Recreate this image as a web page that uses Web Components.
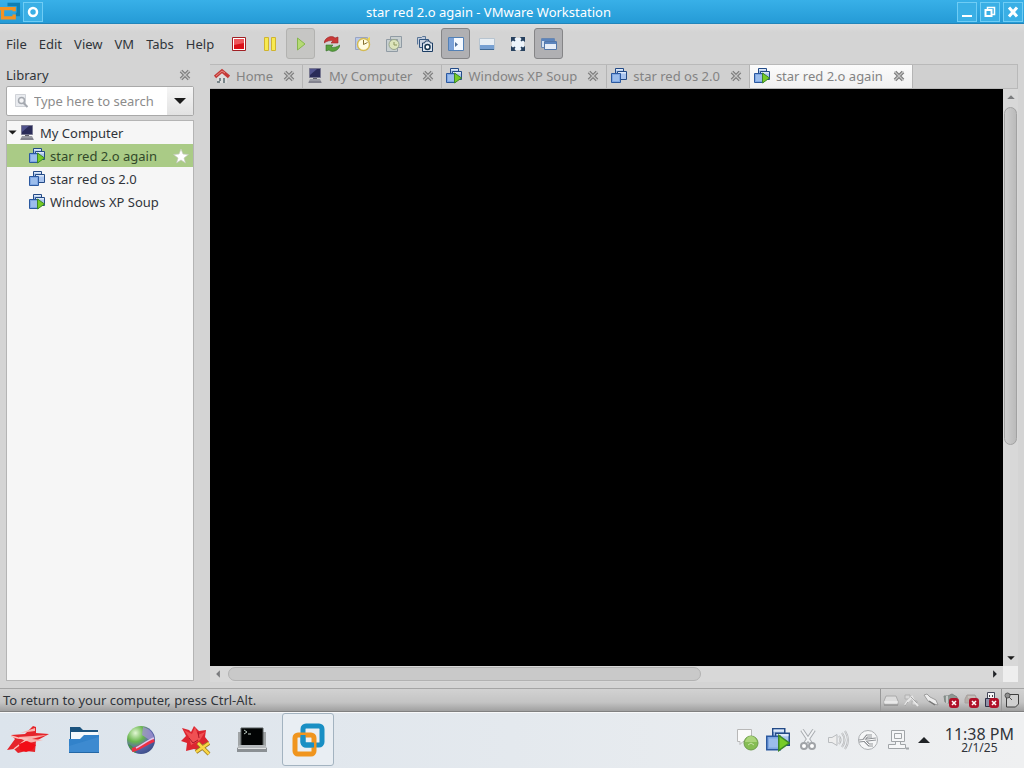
<!DOCTYPE html>
<html lang="en">
<head>
<meta charset="utf-8">
<title>star red 2.o again - VMware Workstation</title>
<style>
    body {
        margin: 0;
        height: 100vh;
        display: flex;
        flex-direction: column;
        overflow: hidden;
        background: #d4d4d4;
        color: #30343a;
        font: 13px/20px "Noto Sans", "Open Sans", sans-serif;
    }
</style>
</head>
<body>
<title-bar>star red 2.o again - VMware Workstation</title-bar>
<menu-bar></menu-bar>
<work-area>
    <library-panel slot="library"></library-panel>
    <tab-strip>
        <vm-tab icon="home">Home</vm-tab>
        <vm-tab icon="computer">My Computer</vm-tab>
        <vm-tab icon="vm-on">Windows XP Soup</vm-tab>
        <vm-tab icon="vm">star red os 2.0</vm-tab>
        <vm-tab icon="vm-on" active>star red 2.o again</vm-tab>
    </tab-strip>
    <console-view></console-view>
</work-area>
<status-bar>To return to your computer, press Ctrl-Alt.</status-bar>
<task-bar></task-bar>

<script>
const badge = '<rect x="6" y="6" width="10" height="10" rx="3" fill="#b01028"/><path d="M9 9l4 4m0-4l-4 4" stroke="#fff" stroke-width="1.5"/>';
const vmBase = `<path d="M4.500 .500h8v8h-8z" fill="#9dbbe6" stroke="#234a86"/><path d="M5 1h7v1.500H5z" fill="#dce8f8"/>
    <path d="M6.500 3.500h9v8h-9z" fill="#a9c4ee" stroke="#234a86"/><path d="M7 4h8v1.500H7z" fill="#dce8f8"/>
    <path d="M.500 5.500h9v9h-9z" fill="#7ea6e2" stroke="#2b59a0"/><path d="M2 7h6v6H2z" fill="#9bbdec"/>`;

// each entry: [viewBox side, markup]
const icons = {
    app: [24, '<path d="M9 3h13v12h-3" fill="none" stroke="#0f7fb2" stroke-width="4"/><path d="M-3 8h20v3M17 15v4H3V9" fill="none" stroke="#f29222" stroke-width="4"/>'],
    ring: [16, '<circle cx="8" cy="8" r="4" fill="none" stroke="#fff" stroke-width="2.5"/>'],
    minimize: [16, '<path d="M3 12h10" stroke="#fff" stroke-width="2"/>'],
    restore: [16, '<path d="M5.500 6V3.500h7v7H10" fill="none" stroke="#fff" stroke-width="1.500"/><path d="M3.500 6h6v6h-6z" fill="none" stroke="#fff" stroke-width="2"/>'],
    quit: [16, '<path d="M4 3.500l8 9m0-9l-8 9" stroke="#fff" stroke-width="3"/>'],
    close: [12, '<path d="M2 2l8 8m0-8l-8 8" stroke="#7c7c7c" stroke-width="3.600"/><path d="M1.500 1.500l9 9m0-9l-9 9" stroke="#c4c4c4" stroke-width="1.200"/>'],
    stop: [16, '<path d="M1.500 1.500h13v13h-13z" fill="#fff" stroke="#a02024"/><path d="M3 3h10v10H3z" fill="#db1018"/><path d="M3 3h10v4L3 9z" fill="#ee555a"/>'],
    pause: [16, '<path d="M2.500 1.500h4v13h-4zM9.500 1.500h4v13h-4z" fill="#f7ea50" stroke="#d0b430"/>'],
    play: [16, '<path d="M4.500 2v12L12 8z" fill="#b5da75" stroke="#86b64c"/>'],
    restart: [16, '<path d="M0 7c1-6 8-8 11-5l3-1v6H7l2-2C6 4 3 5 0 7z" fill="#c93a38" stroke="#9b2526" stroke-width=".6"/><path d="M16 9c-1 6-8 8-11 5l-3 1V9h7l-2 2c3 1 6 0 9-2z" fill="#58a03c" stroke="#35702a" stroke-width=".6"/>'],
    snapshot: [16, '<path d="M.500 1.500h12v12H.500z" fill="#b9c8e8" stroke="#98a4c4"/><circle cx="8.500" cy="8.500" r="6" fill="#fffce0" stroke="#d4bb55" stroke-width="1.500"/><path d="M8.500 4v4.500l4-2" stroke="#867232" fill="none"/><path d="M12 3l3-2v4z" fill="#efd650"/>'],
    revert: [16, '<path d="M4.500 .500h11v11h-11zM.500 3.500h11v12H.500z" fill="#c8cfd0" stroke="#909ba4"/><circle cx="8" cy="8.500" r="5" fill="#dce4bc" stroke="#98a68c"/><path d="M8 6v3h3" fill="none" stroke="#8c965c"/>'],
    manager: [16, '<path d="M.500 8.500v-7h4l1-1h3v3" fill="#c1cbdc" stroke="#5b7697"/><path d="M2.500 3.500h9v8h-9z" fill="#cad3e0" stroke="#32557f"/><path d="M5.500 7h2l1-2h4l1 2h2v8.500h-10z" fill="#dce4ee" stroke="#1c3d63"/><circle cx="10.500" cy="11" r="2.500" fill="#fff" stroke="#173650" stroke-width="1.500"/>'],
    sidebar: [16, '<path d="M.500 1.500h15v13H.500z" fill="#f5f9ff" stroke="#5380b5"/><path d="M1 2h5v12H1z" fill="#7ca2d8"/><path d="M7 6l3 2.500L7 11z" fill="#50709c"/>'],
    thumbs: [16, '<path d="M.500 2.500h15v11H.500z" fill="#e8eef4" stroke="#b7c4d0"/><path d="M1 9h14v4H1z" fill="#77a0d2"/><path d="M1 13.500h14" stroke="#416994"/>'],
    fullscreen: [16, '<path d="M2 2h12v12H2z" fill="#edf4fb"/><path d="M1 1h5L4.500 3 5.500 4.500l-1 1L3 4.500 1 6zM10 1h5v5l-2-1.500-1.500 1-1-1L11.500 3zM1 10l2 1.500 1.500-1 1 1L4.500 13 6 15H1zM11.500 10.500l1.500 1 2-1.500v5h-5l1.500-2-1-1.500z" fill="#27415f"/>'],
    unity: [16, '<path d="M.500 2.500h13v9H.500z" fill="#d4e1f2" stroke="#6987b1"/><path d="M3.500 5.500h12v8h-12z" fill="#e6edf7" stroke="#5276a8"/><path d="M1 3h12v2H1zM4 6h11v2H4z" fill="#5b84bd"/>'],
    home: [16, '<path d="M3 9l5-5 5 5v6H3z" fill="#dedede"/><path d="M1 9l7-6 7 6" fill="none" stroke="#c43a38" stroke-width="3.500"/><path d="M2 8l6-5 3 2" fill="none" stroke="#e48a83"/><path d="M5 10h2v3H5zM9 10h2v5H9zM3 13h3v2H3z" fill="#79868a"/>'],
    computer: [16, '<path d="M2.500 .500h11v9h-11z" fill="#2a2b58" stroke="#777790"/><path d="M3 1h7L3 7z" fill="#52548e"/><path d="M6 10h4v2H6z" fill="#60606a"/><path d="M3 11h10l2 4H1z" fill="#9a9ba4"/><path d="M2 14h12" stroke="#6a6b78"/>'],
    vm: [16, vmBase],
    'vm-on': [16, vmBase + '<path d="M8.500 5v10L15.500 10z" fill="#77cc26" stroke="#3c8728"/>'],
    find: [16, '<path d="M2.500 1.500h10v12h-10z" fill="#e9ebef" stroke="#d0d3d8"/><circle cx="8.500" cy="7.500" r="3" fill="#f4f4f6" stroke="#a5a9b0" stroke-width="1.500"/><path d="M10.500 10l4 4" stroke="#a5a9b0" stroke-width="2"/>'],
    down: [16, '<path d="M2 5h12L8 11z" fill="#1c1c1c"/>'],
    star: [16, '<path d="M8 1l2 5 5.500.500-4.500 3.500 1.500 5L8 12l-4.500 3L5 10 .500 6.500 6 6z" fill="#fff" stroke="#c3c9ba" stroke-width=".7"/>'],
    disk: [16, '<path d="M3 4h10l2 5v4H1V9z" fill="#dcdcdc" stroke="#aaa"/><path d="M1 10h14" stroke="#f6f6f6"/><path d="M1 13h14" stroke="#858585"/>'],
    net: [16, '<path d="M2 3h5v4H2zM9 9h5v4H9z" fill="#d8d8d8" stroke="#b0b0b0"/><path d="M2 13l3-4 4-4 2 4 4 5" fill="none" stroke="#e8e8e8" stroke-width="2"/><path d="M2 14l3-4M8 5l6 6" stroke="#a5a5a5"/>'],
    plug: [16, '<path d="M1 3l3-1 3 3 6 3 2 5-4-1-6-3z" fill="#ededed" stroke="#9e9e9e"/><path d="M6 9l6 4" stroke="#777" stroke-width="1.500"/>'],
    'sound-off': [16, '<path d="M1 4h4l4-2 5 3v6L9 12 2 10z" fill="#8e9893" stroke="#7f8784"/><path d="M4 4v7" stroke="#c5cac8" stroke-width="2"/>' + badge],
    'printer-off': [16, '<path d="M4 3h8l2 4v4H2V7z" fill="#b5aea9" stroke="#a7a09e"/><path d="M5 5h7" stroke="#d6d1cc"/>' + badge],
    'usb-off': [16, '<path d="M4.500 .500h7v6h-7z" fill="#f5f5f7" stroke="#45485a"/><path d="M2.500 6.500h11v8h-11z" fill="#8f91a7" stroke="#2f3145"/><path d="M6 3h1v2H6zm3 0h1v2H9z" fill="#444"/>' + badge],
    message: [16, '<path d="M2.500 3v12h9l3-3V2.500H6" fill="#d0d0d0" stroke="#3e3e3e"/><circle cx="3.500" cy="3.500" r="2.500" fill="#8f8f8f" stroke="#555"/><path d="M5 5l3 3" stroke="#555"/>'],
    redstar: [44, '<path d="M1 32l8-11-4-4 14-1 8-8 3 1v6l13 1-13 7-1 11-9-1-8 2-4-4z" fill="#e5242a"/><path d="M14 15l15-5v3zM12 19l29-2-15 4 11 1-14 3z" fill="#f9b1ab"/><path d="M5 18l7 2 9 1-13 10" fill="none" stroke="#fac3bd" stroke-width="1.500"/><path d="M13 26l8-3 9 4-4 5-6 2-6-2z" fill="#f20d16"/>'],
    folder: [32, '<path d="M2 3h10l3 3h15v20H2z" fill="#1b537e"/><path d="M3 8h27v8H3z" fill="#f4f8fb"/><path d="M1 15h11l4-4h15v18H1z" fill="#3282ca"/><path d="M1 22L31 13v16H1z" fill="#4b94d6" opacity=".45"/><path d="M1 28.500h30" stroke="#2367a5"/>'],
    globe: [32, '<defs><radialGradient id="g" cx=".3" cy=".25" r=".9"><stop offset="0" stop-color="#e2f7d4"/><stop offset=".35" stop-color="#69b64e"/><stop offset=".6" stop-color="#5b67ae"/><stop offset="1" stop-color="#34477c"/></radialGradient></defs><circle cx="17" cy="16" r="14" fill="url(#g)"/><path d="M19 3c8 2 12 8 11 15l-6-3-6-4z" fill="#a092d0" opacity=".8"/><path d="M4 20c5 2 7 4 8 9-4-1-7-5-8-9z" fill="#459248"/><path d="M8 26c7-1 10-5 22-10" stroke="#ed3045" stroke-width="4" fill="none"/><path d="M12 24c5-2 10-7 18-10" stroke="#dfc8ec" stroke-width="1.500" fill="none"/>'],
    splat: [32, '<path d="M11 8l3-6 5 5 7-1-1 7 4 5-7 3-2 6-6-2-8 2 1-8-6-2 5-5-4-8 7 2z" fill="#dc2530"/><path d="M4 6l8 4 3-7 3 8 7-3-5 8-9 5-2-8z" fill="#f05053"/><path d="M9 14l4 5 5-3m0-8l1 6" stroke="#a91627" fill="none"/><path d="M18 19l11 11m-13-2l13-9" stroke="#967720" stroke-width="4"/><path d="M18 19l11 11m-13-2l13-9" stroke="#f9d645" stroke-width="2.500"/>'],
    terminal: [32, '<path d="M2 8h4v14H2zm24 0h4v14h-4z" fill="#a0a4a6"/><path d="M5 4h22v19H5z" fill="#020404" stroke="#545b5b"/><path d="M8 6l3 2-3 2m4 0h3" fill="none" stroke="#b7c6bd"/><path d="M3 21h26l2 3H1z" fill="#b5b9bc"/><path d="M1 24h30v4H1z" fill="#8b9094"/><path d="M2 24.500h28" stroke="#e0e2e3"/>'],
    vmware: [36, '<rect x="13" y="4" width="19" height="19" rx="3" fill="none" stroke="#198fc4" stroke-width="5"/><rect x="5" y="13" width="19" height="19" rx="3" fill="none" stroke="#f0951e" stroke-width="5"/><path d="M13 13v7a3 3 0 0 0 3 3h8" fill="none" stroke="#198fc4" stroke-width="5"/>'],
    notify: [24, '<path d="M1.500 1.500h14v12H7l-3 3v-3H1.500z" fill="#fafafa" stroke="#b8b8b8"/><circle cx="15" cy="15" r="7" fill="#86bd54" stroke="#6d9c4b"/><path d="M9 14c2-8 10-8 12 0z" fill="#abd57b"/><path d="M12 17l3-2 3 2" fill="none" stroke="#c6e2a8"/>'],
    cut: [24, '<path d="M6 2l10 15M18 2L8 17" stroke="#a8acb0" stroke-width="4"/><path d="M6 2l10 15M18 2L8 17" stroke="#f1f3f5" stroke-width="2"/><circle cx="8" cy="18" r="3" fill="#fff" stroke="#a0a3a7" stroke-width="2"/><circle cx="16" cy="18" r="3" fill="#fff" stroke="#a0a3a7" stroke-width="2"/>'],
    volume: [24, '<path d="M2.500 9.500H6l5-3v11l-5-3H2.500z" fill="#eee" stroke="#b9bcbf"/><path d="M13 8q3 4 0 8M16 5q5 7 0 14M19 3q6 9 0 18" fill="none" stroke="#b0b3b6" stroke-width="2"/><path d="M13 8q3 4 0 8M16 5q5 7 0 14M19 3q6 9 0 18" fill="none" stroke="#eee" stroke-width=".7"/>'],
    usb: [24, '<circle cx="12" cy="12" r="9.500" fill="#f5f6f7" stroke="#acafb2"/><path d="M3 13l17-2M7 13l4-5h5M8 12l5 5h4" fill="none" stroke="#909397" stroke-width="3"/><path d="M3 13l17-2M7 13l4-5h5M8 12l5 5h4" fill="none" stroke="#fff"/>'],
    wired: [24, '<path d="M5.500 2.500h13v11h-13zM8.500 5.500h7v5h-7zM9.500 13.500v3h-7v4h17v-4h-5v-3" fill="#f6f7f8" stroke="#a1a5a8"/><path d="M20 20.500h3" stroke="#a1a5a8" stroke-width="2"/>'],
    up: [16, '<path d="M2 11h12L8 5z" fill="#202326"/>']
};

function define(name, html) {
    customElements.define(name, class extends HTMLElement {
        connectedCallback() {
            this.attachShadow({ mode: 'open' });
            this.shadowRoot.innerHTML = typeof html === 'function' ? html(this) : html;
        }
    });
}

define('vm-icon', el => {
    const [box, markup] = icons[el.getAttribute('name')];
    const size = el.getAttribute('size') || 16;
    return `
        <style>
        :host { display: inline-flex; flex: none; }
        svg { display: block; }
        </style>
        <svg width="${size}" height="${size}" viewBox="0 0 ${box} ${box}" aria-hidden="true">${markup}</svg>`;
});

define('title-bar', `
    <style>
    :host {
        display: flex;
        align-items: center;
        height: 24px;
        box-sizing: border-box;
        border-bottom: 1px solid #2285ba;
        background: linear-gradient(#38b0e8, #259bd6);
        color: #fff;
    }
    .side { display: flex; gap: 3px; }
    .left { width: 44px; }
    .right { justify-content: flex-end; width: 90px; padding-right: 1px; }
    .title { flex: 1; text-align: center; }
    button {
        display: flex;
        align-items: center;
        justify-content: center;
        width: 20px;
        height: 20px;
        padding: 0;
        border: 1px solid #6fcdf5;
        background: #3aafe5;
    }
    </style>
    <div class="side left">
        <vm-icon name="app" size="20"></vm-icon>
        <button aria-label="Window menu"><vm-icon name="ring"></vm-icon></button>
    </div>
    <div class="title"><slot></slot></div>
    <div class="side right">
        <button aria-label="Minimize"><vm-icon name="minimize"></vm-icon></button>
        <button aria-label="Restore"><vm-icon name="restore"></vm-icon></button>
        <button aria-label="Close"><vm-icon name="quit"></vm-icon></button>
    </div>`);

const tools = [
    ['stop', 'Power off'], ['pause', 'Suspend'], ['play', 'Power on', 'pale'], ['restart', 'Restart'],
    ['snapshot', 'Take snapshot'], ['revert', 'Revert'], ['manager', 'Snapshot manager'], ['sidebar', 'Library', 'on'],
    ['thumbs', 'Thumbnail bar'], ['fullscreen', 'Full screen'], ['unity', 'Unity', 'on']
];

define('menu-bar', () => `
    <style>
    :host {
        display: flex;
        align-items: center;
        gap: 10px;
        height: 40px;
        padding-left: 6px;
        background: linear-gradient(#dedede, #d4d4d4 8px);
    }
    nav { display: flex; gap: 12px; }
    button { font: inherit; color: inherit; padding: 0; border: 0; background: none; }
    .tools { display: flex; gap: 2px; padding-bottom: 1px; }
    .tools button {
        display: flex;
        align-items: center;
        justify-content: center;
        width: 29px;
        height: 31px;
        border: 1px solid transparent;
        border-radius: 3px;
    }
    .tools .pale { background: #c6c6c4; border-color: #b2b2b0; }
    .tools .on { background: #b0b0b3; border-color: #858587; }
    </style>
    <nav>${['File', 'Edit', 'View', 'VM', 'Tabs', 'Help'].map(m => `<button>${m}</button>`).join('')}</nav>
    <div class="tools">
        ${tools.map(([icon, label, cls]) => `<button class="${cls || ''}" aria-label="${label}"><vm-icon name="${icon}"></vm-icon></button>`).join('')}
    </div>`);

define('work-area', `
    <style>
    :host {
        display: flex;
        flex: 1;
        min-height: 0;
        gap: 16px;
        padding: 0 6px;
    }
    .main { display: flex; flex-direction: column; flex: 1; min-width: 0; padding-bottom: 6px; }
    </style>
    <slot name="library"></slot>
    <div class="main"><slot></slot></div>`);

define('library-panel', `
    <style>
    :host {
        display: flex;
        flex-direction: column;
        width: 188px;
        flex: none;
        padding-bottom: 7px;
    }
    header { display: flex; align-items: center; justify-content: space-between; height: 22px; padding-right: 3px; }
    button { display: flex; align-items: center; justify-content: center; padding: 0; border: 0; background: none; }
    .search {
        display: flex;
        align-items: center;
        height: 28px;
        margin-bottom: 4px;
        border: 1px solid #a9a9a9;
        border-radius: 2px;
        background: #fff;
    }
    .search label { display: flex; padding: 0 5px 0 6px; }
    input { flex: 1; min-width: 0; padding: 0; border: 0; outline: 0; font: inherit; background: none; }
    input::placeholder { color: #8c8c8c; opacity: 1; }
    .search button { width: 26px; align-self: stretch; background: linear-gradient(#f6f6f6, #e2e2e2); }
    .tree { flex: 1; border: 1px solid #b4b4b4; background: #f6f6f6; }
    ul { list-style: none; margin: 0; padding: 0; }
    .row { display: flex; align-items: center; height: 23px; gap: 5px; padding: 0 4px 0 22px; }
    .root { padding-left: 0; }
    .root vm-icon + vm-icon { margin-left: -4px; }
    .row span { flex: 1; }
    .selected { background: #aacb86; color: #32492a; }
    </style>
    <header>Library<button aria-label="Close library"><vm-icon name="close" size="12"></vm-icon></button></header>
    <div class="search">
        <label for="search" aria-label="Search"><vm-icon name="find" size="16"></vm-icon></label>
        <input id="search" type="text" placeholder="Type here to search">
        <button aria-label="Search options"><vm-icon name="down"></vm-icon></button>
    </div>
    <div class="tree">
        <div class="row root"><vm-icon name="down" size="11"></vm-icon><vm-icon name="computer"></vm-icon><span>My Computer</span></div>
        <ul>
            <li class="row selected"><vm-icon name="vm-on"></vm-icon><span>star red 2.o again</span><vm-icon name="star"></vm-icon></li>
            <li class="row"><vm-icon name="vm"></vm-icon><span>star red os 2.0</span></li>
            <li class="row"><vm-icon name="vm-on"></vm-icon><span>Windows XP Soup</span></li>
        </ul>
    </div>`);

define('tab-strip', `
    <style>
    :host {
        display: flex;
        height: 23px;
        border: 1px solid #b9b9b9;
        border-left-width: 0;
        background: #d0d0d0;
    }
    </style>
    <slot></slot>`);

define('vm-tab', el => `
    <style>
    :host {
        display: flex;
        align-items: center;
        flex: none;
        box-sizing: border-box;
        padding: 0 7px 2px 4px;
        border-right: 1px solid #b5b5b5;
        color: #838383;
        white-space: nowrap;
    }
    :host([active]) { background: linear-gradient(#fbfbfb, #f0f0f0); }
    .label { padding: 0 10px 0 6px; }
    button { display: flex; padding: 0; border: 0; background: none; }
    </style>
    <vm-icon name="${el.getAttribute('icon')}"></vm-icon>
    <span class="label"><slot></slot></span>
    <button aria-label="Close tab"><vm-icon name="close" size="12"></vm-icon></button>`);

define('console-view', `
    <style>
    :host {
        display: grid;
        flex: 1;
        min-height: 0;
        grid-template: 1fr 16px / 1fr 15px;
    }
    .screen { background: #000; }
    .bar { display: flex; background: #d8d8d8; }
    .vertical { flex-direction: column; }
    .bar button { display: flex; align-items: center; justify-content: center; width: 16px; height: 16px; padding: 0; border: 0; background: none; }
    .vertical button { width: 15px; }
    .track { flex: 1; padding: 2px 1px; }
    .bar:not(.vertical) .track { padding: 1px 2px; }
    .thumb { box-sizing: border-box; border: 1px solid #a2a2a2; border-radius: 7px; height: calc(100% * 5 / 8); background: linear-gradient(90deg, #cecece, #bababa); }
    .bar:not(.vertical) .thumb { width: calc(100% * 5 / 8); height: 100%; background: #c9c9c9; border-color: #b2b2b2; }
    .off { opacity: .5; }
    .left { transform: rotate(-90deg); }
    .right { transform: rotate(90deg); }
    .corner { background: #eee; }
    </style>
    <div class="screen"></div>
    <div class="bar vertical">
        <button aria-label="Scroll up"><vm-icon class="off" name="up" size="10"></vm-icon></button>
        <div class="track"><div class="thumb"></div></div>
        <button aria-label="Scroll down"><vm-icon name="down" size="10"></vm-icon></button>
    </div>
    <div class="bar">
        <button aria-label="Scroll left"><vm-icon class="off left" name="up" size="10"></vm-icon></button>
        <div class="track"><div class="thumb"></div></div>
        <button aria-label="Scroll right"><vm-icon class="right" name="up" size="10"></vm-icon></button>
    </div>
    <div class="corner"></div>`);

define('status-bar', () => `
    <style>
    :host {
        display: flex;
        align-items: center;
        height: 24px;
        box-sizing: border-box;
        padding: 0 4px 0 3px;
        border-top: 1px solid #a5a5a5;
        border-bottom: 1px solid #808080;
        background: linear-gradient(#d2d2d2, #c4c4c4 60%, #a0a0a0);
    }
    .text { flex: 1; }
    .devices { display: flex; align-items: center; gap: 4px; height: 100%; padding: 0 2px; border-left: 1px solid #999; }
    .messages { padding-right: 0; }
    </style>
    <span class="text"><slot></slot></span>
    <div class="devices">
        ${['disk', 'net', 'plug', 'sound-off', 'printer-off', 'usb-off'].map(n => `<vm-icon name="${n}"></vm-icon>`).join('')}
    </div>
    <div class="devices messages"><vm-icon name="message"></vm-icon></div>`);

define('task-bar', () => `
    <style>
    :host {
        display: flex;
        align-items: center;
        height: 56px;
        box-sizing: border-box;
        padding: 0 10px 2px 2px;
        border-top: 1px solid #f8f9fa;
        background: linear-gradient(90deg, #dce4ec, #e4e9ee 50%, #eff0f1);
    }
    .apps { display: flex; gap: 4px; flex: 1; }
    button { display: flex; align-items: center; justify-content: center; padding: 0; border: 0; background: none; }
    .apps button { box-sizing: border-box; width: 52px; height: 53px; border-radius: 3px; }
    .apps .active { border: 1px solid #a3b3c0; background: #e9eef3; }
    .tray { display: flex; align-items: center; gap: 6px; padding-right: 13px; }
    .clock { display: flex; flex-direction: column; align-items: center; }
    .time { font-size: 16px; line-height: 16px; }
    .date { font-size: 12px; line-height: 12px; }
    </style>
    <div class="apps">
        <button aria-label="Start"><vm-icon name="redstar" size="44"></vm-icon></button>
        <button aria-label="Files"><vm-icon name="folder" size="32"></vm-icon></button>
        <button aria-label="Browser"><vm-icon name="globe" size="32"></vm-icon></button>
        <button aria-label="Wine"><vm-icon name="splat" size="32"></vm-icon></button>
        <button aria-label="Terminal"><vm-icon name="terminal" size="32"></vm-icon></button>
        <button class="active" aria-label="VMware"><vm-icon name="vmware" size="36"></vm-icon></button>
    </div>
    <div class="tray">
        ${['notify', 'vm-on', 'cut', 'volume', 'usb', 'wired'].map(n => `<button aria-label="${n}"><vm-icon name="${n}" size="24"></vm-icon></button>`).join('')}
        <button aria-label="Show hidden icons"><vm-icon name="up" size="16"></vm-icon></button>
    </div>
    <div class="clock"><span class="time">11:38 PM</span><span class="date">2/1/25</span></div>`);
</script>
</body>
</html>
